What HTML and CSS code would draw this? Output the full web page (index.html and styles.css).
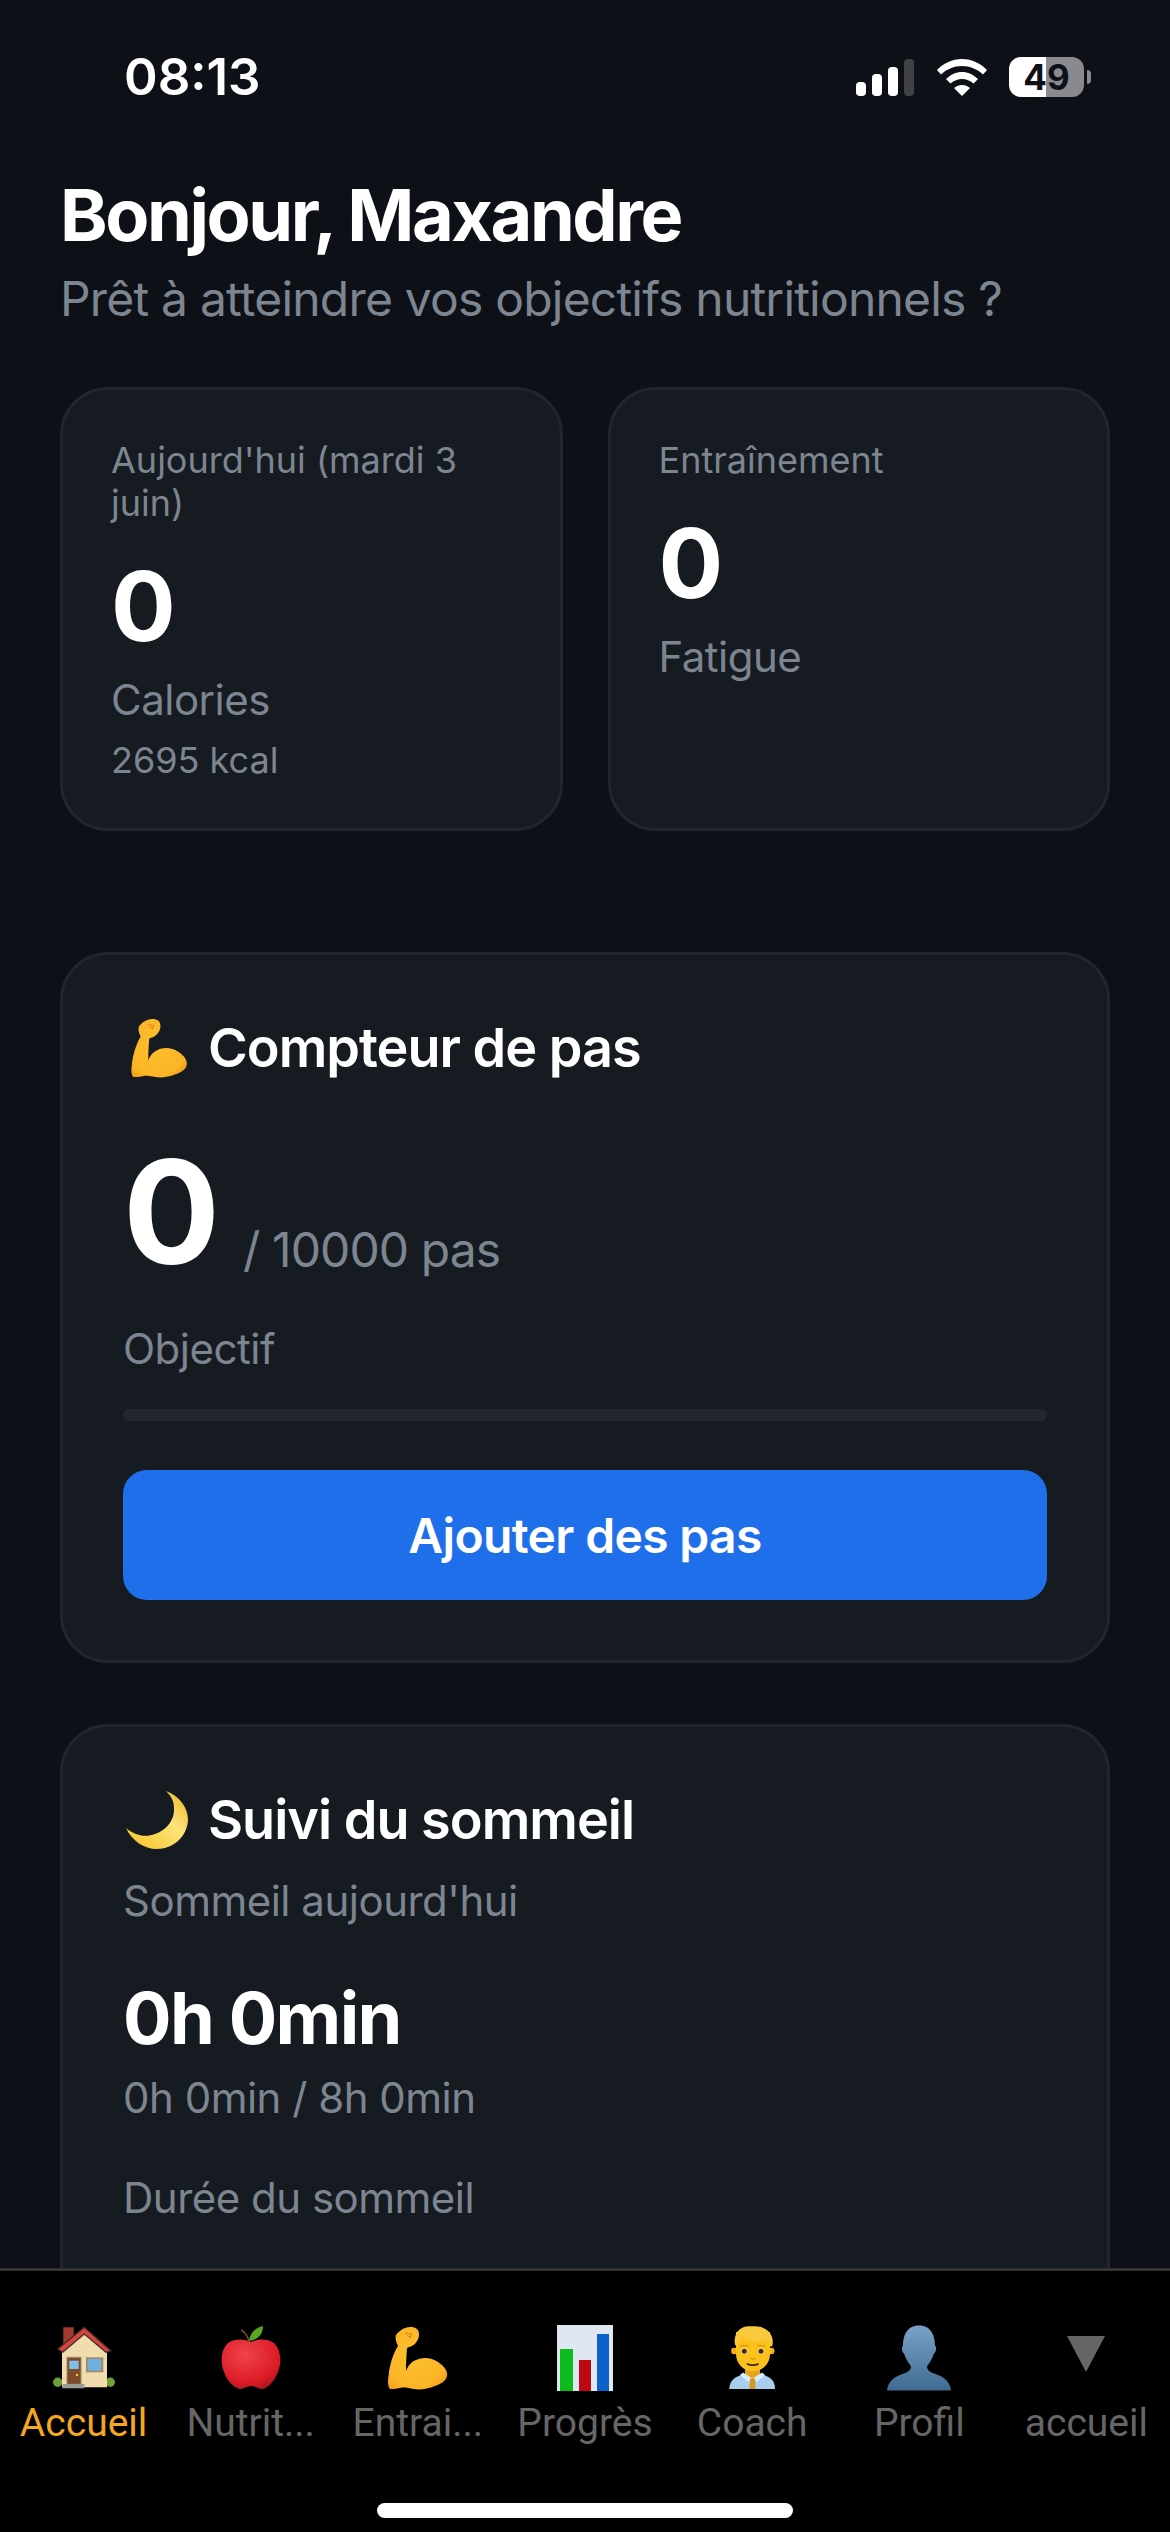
FILE: index.html

```html
<!DOCTYPE html>
<html lang="fr">
<head>
    <meta charset="UTF-8">
    <meta name="viewport" content="width=device-width, initial-scale=1.0">
    <title>Accueil</title>
    <link rel="stylesheet" href="styles.css">
</head>
<body>
    <svg class="defs" width="0" height="0">
        <defs>
            <radialGradient id="armGrad" cx="0.45" cy="0.45" r="0.7">
                <stop offset="0" stop-color="#fdc02f"/>
                <stop offset="0.75" stop-color="#fbb526"/>
                <stop offset="1" stop-color="#ef9a17"/>
            </radialGradient>
            <symbol id="muscle" viewBox="0 0 60 64">
                <path fill="url(#armGrad)" d="M8 9 C10 6 14 3 17 2 C21 0.500 26 0.500 29 3 C31 5 31.500 9 30.500 12 C29 16 26 20 21 21 L19 22 C18.500 29 18 37 18 45 C20 40 23 36 28 34 C34 31 43 31 50 36 C56 40 60 45 59 50 C58 55 53 58 47 60 C40 63 32 64 26 63 C20 62 16 61 12 62 C8 63 5 63 2 63 C0 61 -0.500 56 0.500 50 C1 43 3 35 5.500 29 C7 25 8.500 22 10 20 C8 16 7 12 8 9 Z"/>
                <path fill="none" stroke="#c8760a" stroke-width="0.800" d="M17 7 L24 8 L22 12 M19 9.500 L23 11"/>
            </symbol>
        </defs>
    </svg>

    <div class="status-bar">
        <span class="time">08:13</span>
        <div class="status-icons">
            <svg class="signal" width="58" height="37" viewBox="0 0 58 37">
                <rect x="0" y="23" width="10" height="14" rx="4" fill="#fff"/>
                <rect x="16" y="15" width="10" height="22" rx="4" fill="#fff"/>
                <rect x="32" y="8" width="10" height="29" rx="4" fill="#fff"/>
                <rect x="48" y="0" width="10" height="37" rx="4" fill="#3f4145"/>
            </svg>
            <svg class="wifi" width="50" height="37" viewBox="0 0 50 37">
                <path fill="#fff" d="M25 0 C35 0 43 4 50 11 L46 15.500 C40 10 33 7 25 7 C17 7 10 10 4 15.500 L0 11 C7 4 15 0 25 0 Z"/>
                <path fill="#fff" d="M25 13 C31 13 36 15.500 41 20 L36.500 24.500 C33 21.500 29.500 20 25 20 C20.500 20 17 21.500 13.500 24.500 L9 20 C14 15.500 19 13 25 13 Z"/>
                <path fill="#fff" d="M25 26 C28 26 30.500 27 33 29 L25 37 L17 29 C19.500 27 22 26 25 26 Z"/>
            </svg>
            <div class="battery"><span>49</span></div>
            <div class="battery-nub"></div>
        </div>
    </div>

    <main class="content">
        <h1 class="greeting">Bonjour, Maxandre</h1>
        <p class="subtitle">Prêt à atteindre vos objectifs nutritionnels ?</p>

        <div class="stats">
            <div class="stat-card">
                <p class="stat-label">Aujourd'hui (mardi 3 juin)</p>
                <p class="stat-value">0</p>
                <p class="stat-name">Calories</p>
                <p class="stat-note">2695 kcal</p>
            </div>
            <div class="stat-card">
                <p class="stat-label">Entraînement</p>
                <p class="stat-value">0</p>
                <p class="stat-name">Fatigue</p>
            </div>
        </div>

        <section class="card steps-card">
            <h2 class="card-title">
                <svg class="title-icon muscle-icon" width="57" height="60"><use href="#muscle"/></svg>
                Compteur de pas
            </h2>
            <div class="steps-row">
                <span class="steps-value">0</span>
                <span class="steps-goal">/ 10000 pas</span>
            </div>
            <p class="muted steps-label">Objectif</p>
            <div class="progress"></div>
            <button class="primary-btn">Ajouter des pas</button>
        </section>

        <section class="card sleep-card">
            <h2 class="card-title">
                <svg class="title-icon moon-icon" width="62" height="58" viewBox="0 0 62 58">
                    <defs>
                        <linearGradient id="moonGrad" x1="0" y1="1" x2="1" y2="0">
                            <stop offset="0" stop-color="#f7c325"/>
                            <stop offset="0.6" stop-color="#fde37a"/>
                            <stop offset="1" stop-color="#eab51e"/>
                        </linearGradient>
                    </defs>
                    <path fill="url(#moonGrad)" d="M40 0 C54 5 62 17 62 29 C61 46 47 58 31 58 C18 58 6 50 0 37 C8 44 19 47 29 43 C41 39 49 28 48 17 C48 10 45 5 40 0 Z"/>
                </svg>
                Suivi du sommeil
            </h2>
            <p class="muted sleep-sub">Sommeil aujourd'hui</p>
            <p class="sleep-value">0h 0min</p>
            <p class="muted sleep-range">0h 0min / 8h 0min</p>
            <p class="muted sleep-label">Durée du sommeil</p>
        </section>
    </main>

    <nav class="tabbar">
        <div class="tabs">
            <div class="tab active">
                <svg class="tab-icon" width="62" height="64" viewBox="0 0 62 64">
                    <rect x="10.300" y="1.300" width="10.400" height="18" fill="#a33a30"/>
                    <circle cx="4.700" cy="56.300" r="4.700" fill="#6f9e3a"/>
                    <circle cx="57.300" cy="56.300" r="4.700" fill="#6f9e3a"/>
                    <path fill="#f1dcae" d="M9 24 L31.300 6 L54 24 L54 61.300 L9 61.300 Z"/>
                    <path fill="#d2453c" stroke="#3a2a2a" stroke-width="1.200" d="M4.700 23 L31.300 1.300 L58 24.700 L53 26.300 L31.300 8 L9.700 26.300 Z"/>
                    <rect x="14" y="31.300" width="14" height="27" fill="#7c4a2d" stroke="#a08a6c" stroke-width="1"/>
                    <rect x="16.300" y="34.700" width="9.400" height="8.300" fill="#7fc0e8"/>
                    <circle cx="24" cy="49" r="1.200" fill="#f5c542"/>
                    <rect x="33" y="31.300" width="17.300" height="15" fill="#a08a6c"/>
                    <rect x="34.700" y="33" width="13.300" height="11.700" fill="#6fb1de"/>
                    <rect x="9.700" y="58" width="21.600" height="4.300" fill="#9a9a96"/>
                </svg>
                <span class="tab-label">Accueil</span>
            </div>
            <div class="tab">
                <svg class="tab-icon" width="60" height="64" viewBox="0 0 60 64">
                    <defs>
                        <radialGradient id="appleGrad" cx="0.4" cy="0.3" r="0.8">
                            <stop offset="0" stop-color="#f0434a"/>
                            <stop offset="0.7" stop-color="#dc1c26"/>
                            <stop offset="1" stop-color="#a4141c"/>
                        </radialGradient>
                    </defs>
                    <path fill="none" stroke="#7a4a2a" stroke-width="1.500" d="M20 4 C24 6 27 10 28 16"/>
                    <path fill="#57a820" d="M28 15 C29 7 34 2 42 0 C42 8 37 14 28 15 Z"/>
                    <path fill="url(#appleGrad)" d="M30 16 C36 13 46 12 53 17 C60 24 61 36 57 46 C53 56 47 62 41 63 C37 63 34 60 30 60 C26 60 23 63 19 63 C13 62 6 55 3 46 C-1 35 0 24 7 17 C14 12 24 13 30 16 Z"/>
                </svg>
                <span class="tab-label">Nutrit...</span>
            </div>
            <div class="tab">
                <svg class="tab-icon" width="60" height="64"><use href="#muscle"/></svg>
                <span class="tab-label">Entrai...</span>
            </div>
            <div class="tab">
                <svg class="tab-icon" width="56" height="66" viewBox="0 0 56 66">
                    <rect width="56" height="66" fill="#dfe8f2"/>
                    <rect x="3" y="24" width="13" height="42" fill="#0cbb1c"/>
                    <rect x="22" y="35" width="12" height="31" fill="#bd0a10"/>
                    <rect x="40" y="9" width="12" height="57" fill="#0d62c9"/>
                </svg>
                <span class="tab-label">Progrès</span>
            </div>
            <div class="tab">
                <svg class="tab-icon" width="47" height="64" viewBox="0 0 47 64">
                    <path fill="#a9cdee" d="M0.300 63 C0.500 55 5 51 14 48.500 L33 48.500 C42 51 46 55 46 63 Z"/>
                    <path fill="#e8a41a" d="M16 42 L31 42 L31 48 L23.500 53 L16 48 Z"/>
                    <path fill="#d8ecfa" d="M14 46.500 L23.500 52.500 L19 56 L11 49 Z"/>
                    <path fill="#d8ecfa" d="M33 46.500 L23.500 52.500 L28 56 L36 49 Z"/>
                    <path fill="#d8981c" d="M21 52.500 L26 52.500 L26.500 63 L20.500 63 Z"/>
                    <circle cx="5.300" cy="25" r="3.200" fill="#f5b01c"/>
                    <circle cx="42.300" cy="25" r="3.200" fill="#f5b01c"/>
                    <path fill="#fcc21b" d="M7 6 L41 6 L41 28 C41 38 33 45.300 23.800 45.300 C15 45.300 7 38 7 28 Z"/>
                    <path fill="#f9c83c" d="M6 19 C5 14 6 10 7.700 7 C10 3 14 0.500 19 0.300 C24 0 29 0 32.700 1.300 C38 3 41 6 42.700 10.300 C44 14 44 17 43.300 20.300 L41 20.300 C41 17 40.500 15 39.300 13.700 C33 15.500 28 15.800 22.700 14.700 C18.500 14 15 12.500 12.700 10.300 C10.500 13 9.700 16 9.300 20.300 Z"/>
                    <path fill="none" stroke="#c98a12" stroke-width="1" stroke-linecap="round" d="M11.500 20 L19 19.500 M28.500 19.500 L36 20"/>
                    <circle cx="15.300" cy="25.300" r="3" fill="#fff6e0"/>
                    <circle cx="32" cy="25.300" r="3" fill="#fff6e0"/>
                    <circle cx="15.300" cy="25.300" r="2.500" fill="#3b2a1a"/>
                    <circle cx="32" cy="25.300" r="2.500" fill="#3b2a1a"/>
                    <path fill="none" stroke="#e09a12" stroke-width="1.500" stroke-linecap="round" d="M22 32.500 C23 33.500 24.500 33.500 25.500 32.500"/>
                    <path fill="none" stroke="#3b2a1a" stroke-width="1.800" stroke-linecap="round" d="M18.500 38 C21 39.500 26.500 39.500 29 38"/>
                </svg>
                <span class="tab-label">Coach</span>
            </div>
            <div class="tab">
                <svg class="tab-icon" width="64" height="65" viewBox="0 0 64 65">
                    <defs>
                        <linearGradient id="userGrad" x1="0" y1="0" x2="0" y2="1">
                            <stop offset="0" stop-color="#7aa3c7"/>
                            <stop offset="1" stop-color="#3f6a91"/>
                        </linearGradient>
                    </defs>
                    <path fill="url(#userGrad)" d="M32 0 C44 0 48 10 48 20 C50 22 49 27 47 28 C45 34 42 38 40 41 C40 44 42 46 47 48 C57 51 63 56 64 65 L0 65 C1 56 7 51 17 48 C22 46 24 44 24 41 C22 38 19 34 17 28 C15 27 14 22 16 20 C16 10 20 0 32 0 Z"/>
                </svg>
                <span class="tab-label">Profil</span>
            </div>
            <div class="tab">
                <div class="tab-icon-box">
                    <svg width="38" height="36" viewBox="0 0 38 36">
                        <polygon points="0,0 38,0 19,36" fill="#666"/>
                    </svg>
                </div>
                <span class="tab-label">accueil</span>
            </div>
        </div>
        <div class="home-indicator"></div>
    </nav>
</body>
</html>
```

FILE: styles.css

```css
* {
    box-sizing: border-box;
}
html, body {
    margin: 0;
    padding: 0;
}
body {
    width: 1170px;
    height: 2532px;
    overflow: hidden;
    display: flex;
    flex-direction: column;
    font-family: Inter, "Liberation Sans", sans-serif;
    background-color: #0d1117;
    color: #fff;
}
p, h1, h2 {
    margin: 0;
    font-weight: 400;
}
.defs {
    display: block;
    height: 0;
}

/* status bar */
.status-bar {
    height: 126px;
    flex-shrink: 0;
    padding: 57px 79px 0 124px;
    display: flex;
    justify-content: space-between;
    align-items: flex-start;
}
.time {
    font-size: 51px;
    line-height: 40px;
    font-weight: 600;
}
.status-icons {
    display: flex;
    align-items: center;
    height: 40px;
}
.signal {
    margin-right: 23px;
}
.wifi {
    margin-right: 22px;
}
.battery {
    width: 75px;
    height: 40px;
    border-radius: 12px;
    background: linear-gradient(90deg, #fff 49%, #8a8a8e 49%);
    color: #0d1117;
    font-size: 35px;
    font-weight: 700;
    line-height: 40px;
    text-align: center;
}
.battery-nub {
    width: 4px;
    height: 14px;
    margin-left: 3px;
    border-radius: 0 4px 4px 0;
    background-color: #8a8a8e;
}

/* page content */
.content {
    flex: 1;
    min-height: 0;
    overflow: hidden;
    padding: 49px 60px 0;
}
.greeting {
    font-size: 72px;
    line-height: 80px;
    font-weight: 700;
    letter-spacing: -2.4px;
}
.subtitle {
    margin-top: 14px;
    font-size: 48px;
    line-height: 60px;
    letter-spacing: -0.8px;
    color: #7d8590;
}
.stats {
    display: flex;
    gap: 45px;
    margin-top: 58px;
}
.stat-card {
    flex: 1;
    height: 444px;
    padding: 49px 48px 48px;
    background-color: #161b22;
    border: 3px solid #21262d;
    border-radius: 48px;
}
.stat-label {
    font-size: 36px;
    line-height: 43px;
    color: #7d8590;
}
.stat-value {
    margin-top: 23px;
    font-size: 96px;
    line-height: 116px;
    font-weight: 700;
}
.stat-name {
    margin-top: 11px;
    font-size: 42px;
    line-height: 50px;
    letter-spacing: -0.5px;
    color: #7d8590;
}
.stat-note {
    margin-top: 13px;
    font-size: 36px;
    line-height: 44px;
    color: #7d8590;
}
.card {
    margin-bottom: 61px;
    padding: 60px;
    background-color: #161b22;
    border: 3px solid #21262d;
    border-radius: 48px;
}
.steps-card {
    height: 711px;
    margin-top: 121px;
}
.sleep-card {
    height: 800px;
}
.card-title {
    display: flex;
    align-items: center;
    gap: 20px;
    margin-top: 3px;
    font-size: 54px;
    line-height: 60px;
    font-weight: 600;
    letter-spacing: -1px;
}
.muscle-icon {
    margin-left: 8px;
}
.moon-icon {
    margin-left: 3px;
}
.muted {
    font-size: 42px;
    line-height: 50px;
    letter-spacing: -0.5px;
    color: #7d8590;
}

/* steps */
.steps-row {
    display: flex;
    align-items: flex-end;
    gap: 23px;
    margin-top: 49px;
}
.steps-value {
    font-size: 144px;
    line-height: 170px;
    font-weight: 700;
}
.steps-goal {
    font-size: 48px;
    line-height: 95px;
    letter-spacing: -0.9px;
    color: #7d8590;
}
.steps-label {
    margin-top: 27px;
}
.progress {
    height: 12px;
    margin-top: 35px;
    border-radius: 6px;
    background-color: #21262d;
}
.primary-btn {
    display: block;
    width: 100%;
    height: 130px;
    margin-top: 49px;
    border: none;
    border-radius: 24px;
    background-color: #1f6feb;
    color: #fff;
    font-family: inherit;
    font-size: 48px;
    font-weight: 600;
    letter-spacing: -0.65px;
}

/* sleep */
.sleep-sub {
    margin-top: 26px;
}
.sleep-value {
    margin-top: 50px;
    font-size: 72px;
    line-height: 84px;
    font-weight: 700;
    letter-spacing: -1.6px;
}
.sleep-range {
    margin-top: 13px;
}
.sleep-label {
    margin-top: 50px;
}

/* bottom nav */
.tabbar {
    flex-shrink: 0;
    height: 264px;
    background-color: #000;
    border-top: 3px solid #333;
}
.tabs {
    display: grid;
    grid-template-columns: repeat(7, 1fr);
    padding-top: 54px;
}
.tab {
    display: flex;
    flex-direction: column;
    align-items: center;
}
.tab-icon,
.tab-icon-box {
    height: 66px;
    display: block;
}
.tab-icon-box {
    padding-top: 11px;
}
.tab-icon-box svg {
    display: block;
}
.tab-label {
    margin-top: 9px;
    font-family: Roboto, "Liberation Sans", sans-serif;
    font-size: 39px;
    line-height: 46px;
    color: #666;
}
.tab.active .tab-label {
    color: #f5a623;
}
.home-indicator {
    width: 416px;
    height: 15px;
    margin: 57px auto 0;
    border-radius: 8px;
    background-color: #fff;
}
```
